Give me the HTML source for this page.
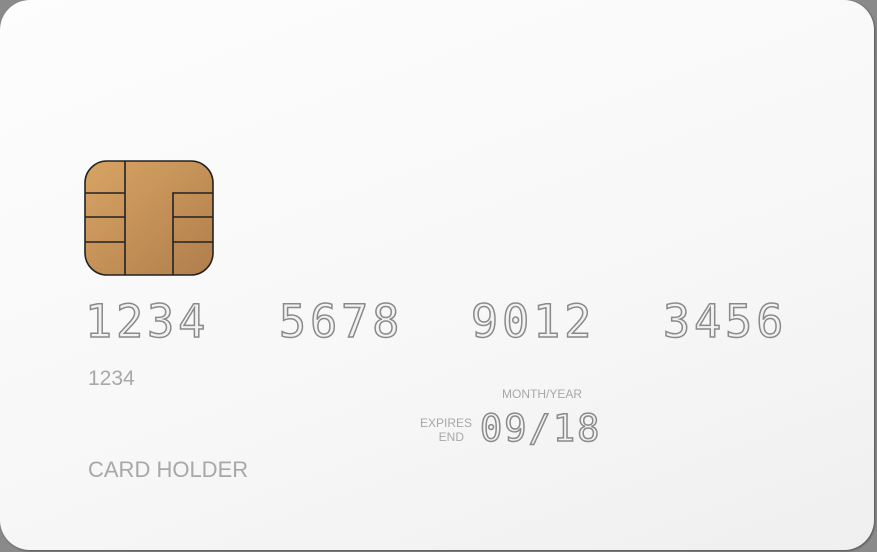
<!DOCTYPE html>
<html><head><style>
html,body{margin:0;padding:0;width:877px;height:552px;background:#8a8a8a;overflow:hidden}
.card{position:absolute;left:0;top:0;width:874px;height:550px;border-radius:30px;background:linear-gradient(160deg,#fdfdfd 0%,#f7f7f7 60%,#efefef 100%);box-shadow:1px 1px 2px rgba(0,0,0,.4)}
.chip{position:absolute;left:84px;top:160px}
.num{position:absolute;top:295px;font-family:"DejaVu Sans Mono",monospace;font-size:45px;letter-spacing:4px;color:#f2f2f2;-webkit-text-stroke:1.5px #8a8a8a}
.t{position:absolute;font-family:"Liberation Sans",sans-serif;color:#a8a8a8}
</style></head><body>
<div class="card">
<svg class="chip" width="130" height="116" viewBox="0 0 130 116">
<defs><linearGradient id="g" x1="0" y1="0" x2="1" y2="1"><stop offset="0" stop-color="#d8a464"/><stop offset="1" stop-color="#b07e4c"/></linearGradient></defs>
<rect x="1" y="1" width="128" height="114" rx="22" fill="url(#g)" stroke="#222" stroke-width="1.6"/>
<g stroke="#222" stroke-width="1.6" fill="none">
<path d="M41 1V115M1 33H41M1 57H41M1 82H41M89 115V33H129M89 57H129M89 82H129"/>
</g></svg>
<div class="num" style="left:85px">1234</div>
<div class="num" style="left:279px">5678</div>
<div class="num" style="left:471px">9012</div>
<div class="num" style="left:663px">3456</div>
<div class="t" style="left:88px;top:367px;font-size:21px">1234</div>
<div class="t" style="left:502px;top:387px;font-size:12px">MONTH/YEAR</div>
<div class="t" style="left:420px;top:416px;font-size:12px;text-align:right;width:44px;line-height:14px">EXPIRES<br>END</div>
<div class="num" style="left:480px;top:407px;font-size:37px;letter-spacing:2px">09/18</div>
<div class="t" style="left:88px;top:457px;font-size:22px">CARD HOLDER</div>
</div>
</body></html>
